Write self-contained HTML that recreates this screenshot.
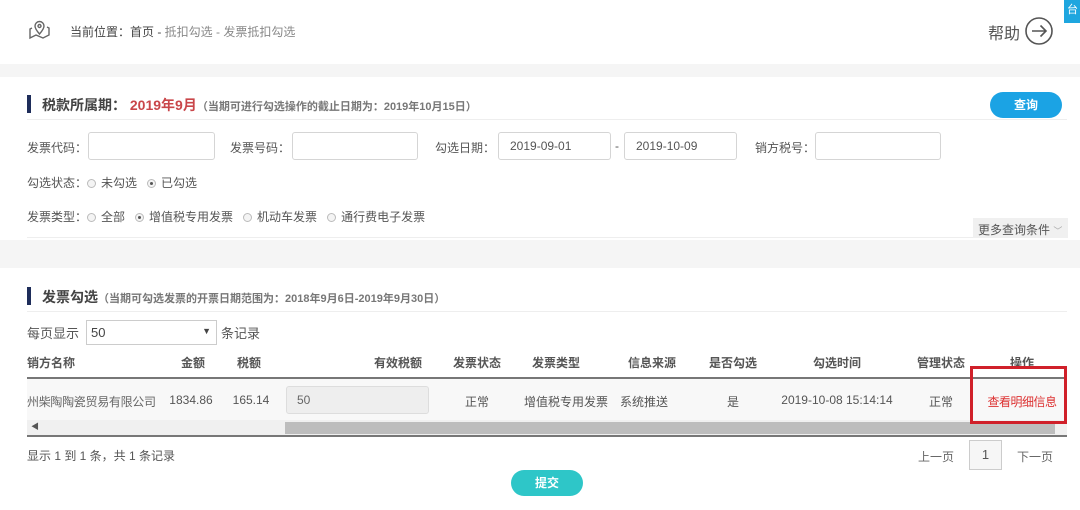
<!DOCTYPE html>
<html><head><meta charset="utf-8"><style>
*{margin:0;padding:0;box-sizing:border-box}
body{width:1080px;height:510px;overflow:hidden;background:#fff;font-family:"Liberation Sans","Noto Sans CJK SC",sans-serif;color:#555;font-size:12px;position:relative}
.a{position:absolute;white-space:nowrap}
.inp{position:absolute;border:1px solid #d5d5d5;border-radius:3px;background:#fff;height:28px;font-size:12px;color:#555;padding:6px 11px}
.rad{display:inline-block;width:9px;height:9px;border:1px solid #bbb;border-radius:50%;vertical-align:-1px;margin-right:5px;background:#f4f4f4;position:relative}
.rad.on::after{content:"";position:absolute;left:2px;top:2px;width:3px;height:3px;border-radius:50%;background:#555}
.th{position:absolute;top:354px;font-weight:bold;font-size:12px;color:#555;transform:translateX(-50%);white-space:nowrap}
.td{position:absolute;top:393px;font-size:12px;color:#555;transform:translateX(-50%);white-space:nowrap}
</style></head><body>
<svg class="a" style="left:28px;top:20px" width="24" height="20" viewBox="0 0 24 20" fill="none" stroke="#666" stroke-width="1.4"><path d="M4 8 L2 9 L2 18 L8 15 L15 18 L21 15 L21 8 L19 7"/><path d="M11.5 14 C8 10 7 8 7 6 A4.5 4.5 0 0 1 16 6 C16 8 15 10 11.5 14Z"/><circle cx="11.5" cy="6" r="1.5"/></svg>
<div class="a" style="left:70px;top:23px;font-size:12px;color:#444">当前位置：首页 - <span style="color:#888">抵扣勾选 - 发票抵扣勾选</span></div>
<div class="a" style="left:988px;top:20px;font-size:16px;color:#555">帮助</div>
<svg class="a" style="left:1024px;top:16px" width="30" height="30" viewBox="0 0 30 30" fill="none" stroke="#555" stroke-width="1.6"><circle cx="15" cy="15" r="13"/><path d="M8 15 H22 M16.5 9.5 L22 15 L16.5 20.5"/></svg>
<div class="a" style="left:1064px;top:0;width:16px;height:23px;background:#1ea6df;color:#fff;font-size:11px;padding:1px 0 0 3px">台</div>
<div class="a" style="left:0;top:64px;width:1080px;height:13px;background:#f5f5f5"></div>
<div class="a" style="left:27px;top:95px;width:4px;height:18px;background:#1e2d5a"></div>
<div class="a" style="left:42px;top:95px;font-size:14px;font-weight:bold;color:#444">税款所属期： <span style="color:#c9464a">2019年9月</span><span style="font-size:11px;color:#777">（当期可进行勾选操作的截止日期为：2019年10月15日）</span></div>
<div class="a" style="left:990px;top:92px;width:72px;height:26px;border-radius:13px;background:#1ba3e4;color:#fff;font-size:12px;font-weight:bold;text-align:center;line-height:26px">查询</div>
<div class="a" style="left:27px;top:119px;width:1040px;height:1px;background:#eee"></div>
<div class="a" style="left:27px;top:139px">发票代码：</div>
<div class="inp" style="left:88px;top:132px;width:127px"></div>
<div class="a" style="left:230px;top:139px">发票号码：</div>
<div class="inp" style="left:292px;top:132px;width:126px"></div>
<div class="a" style="left:435px;top:139px">勾选日期：</div>
<div class="inp" style="left:498px;top:132px;width:113px">2019-09-01</div>
<div class="a" style="left:615px;top:139px">-</div>
<div class="inp" style="left:624px;top:132px;width:113px">2019-10-09</div>
<div class="a" style="left:755px;top:139px">销方税号：</div>
<div class="inp" style="left:815px;top:132px;width:126px"></div>
<div class="a" style="left:27px;top:174px">勾选状态：<span class="rad"></span>未勾选 &nbsp; <span class="rad on"></span>已勾选</div>
<div class="a" style="left:27px;top:208px">发票类型：<span class="rad"></span>全部 &nbsp; <span class="rad on"></span>增值税专用发票 &nbsp; <span class="rad"></span>机动车发票 &nbsp; <span class="rad"></span>通行费电子发票</div>
<div class="a" style="left:27px;top:237px;width:1040px;height:1px;background:#eee"></div>
<div class="a" style="left:973px;top:218px;width:95px;height:20px;background:#f0f0f0;padding:3px 0 0 5px;color:#555">更多查询条件 <span style="color:#aaa;font-size:9px">﹀</span></div>
<div class="a" style="left:0;top:240px;width:1080px;height:28px;background:#f5f5f5"></div>
<div class="a" style="left:27px;top:287px;width:4px;height:18px;background:#1e2d5a"></div>
<div class="a" style="left:42px;top:287px;font-size:14px;font-weight:bold;color:#444">发票勾选<span style="font-size:11px;color:#777">（当期可勾选发票的开票日期范围为：2018年9月6日-2019年9月30日）</span></div>
<div class="a" style="left:27px;top:311px;width:1040px;height:1px;background:#eee"></div>
<div class="a" style="left:27px;top:323px;font-size:13px">每页显示</div>
<div class="a" style="left:86px;top:320px;width:131px;height:25px;border:1px solid #ccc;padding:4px 4px;font-size:13px;color:#444">50<span style="position:absolute;right:5px;top:5px;font-size:9px">▼</span></div>
<div class="a" style="left:221px;top:323px;font-size:13px">条记录</div>
<div class="a" style="left:27px;top:354px;font-weight:bold">销方名称</div>
<div class="th" style="left:193px">金额</div>
<div class="th" style="left:249px">税额</div>
<div class="th" style="left:398px">有效税额</div>
<div class="th" style="left:477px">发票状态</div>
<div class="th" style="left:556px">发票类型</div>
<div class="th" style="left:652px">信息来源</div>
<div class="th" style="left:733px">是否勾选</div>
<div class="th" style="left:837px">勾选时间</div>
<div class="th" style="left:941px">管理状态</div>
<div class="th" style="left:1022px">操作</div>
<div class="a" style="left:27px;top:377px;width:1040px;height:2px;background:#777"></div>
<div class="a" style="left:27px;top:379px;width:1040px;height:41px;background:#f8f8f8"></div>
<div class="a" style="left:27px;top:393px;color:#666;letter-spacing:-0.3px">州柴陶陶瓷贸易有限公司</div>
<div class="td" style="left:191px">1834.86</div>
<div class="td" style="left:251px">165.14</div>
<div class="a" style="left:286px;top:386px;width:143px;height:28px;background:#eee;border:1px solid #ddd;border-radius:3px;padding:6px 10px;color:#666">50</div>
<div class="td" style="left:477px">正常</div>
<div class="td" style="left:566px">增值税专用发票</div>
<div class="td" style="left:644px">系统推送</div>
<div class="td" style="left:733px">是</div>
<div class="td" style="left:837px">2019-10-08 15:14:14</div>
<div class="td" style="left:941px">正常</div>
<div class="td" style="left:1022px;color:#d33;letter-spacing:-0.5px">查看明细信息</div>
<div class="a" style="left:27px;top:420px;width:1040px;height:15px;background:#f0f0f0"></div>
<div class="a" style="left:285px;top:422px;width:770px;height:12px;background:#bdbdbd"></div>
<div class="a" style="left:31px;top:421px;font-size:8px;color:#555">◀</div>
<div class="a" style="left:27px;top:435px;width:1040px;height:2px;background:#777"></div>
<div class="a" style="left:970px;top:366px;width:97px;height:58px;border:3px solid #d0202a"></div>
<div class="a" style="left:27px;top:447px">显示 1 到 1 条，共 1 条记录</div>
<div class="a" style="left:918px;top:448px;color:#666">上一页</div>
<div class="a" style="left:969px;top:440px;width:33px;height:30px;border:1px solid #ccc;background:#f6f6f6;text-align:center;line-height:28px;font-size:13px">1</div>
<div class="a" style="left:1017px;top:448px;color:#666">下一页</div>
<div class="a" style="left:511px;top:470px;width:72px;height:26px;border-radius:13px;background:#2ec6c8;color:#fff;font-weight:bold;text-align:center;line-height:26px">提交</div>
</body></html>
